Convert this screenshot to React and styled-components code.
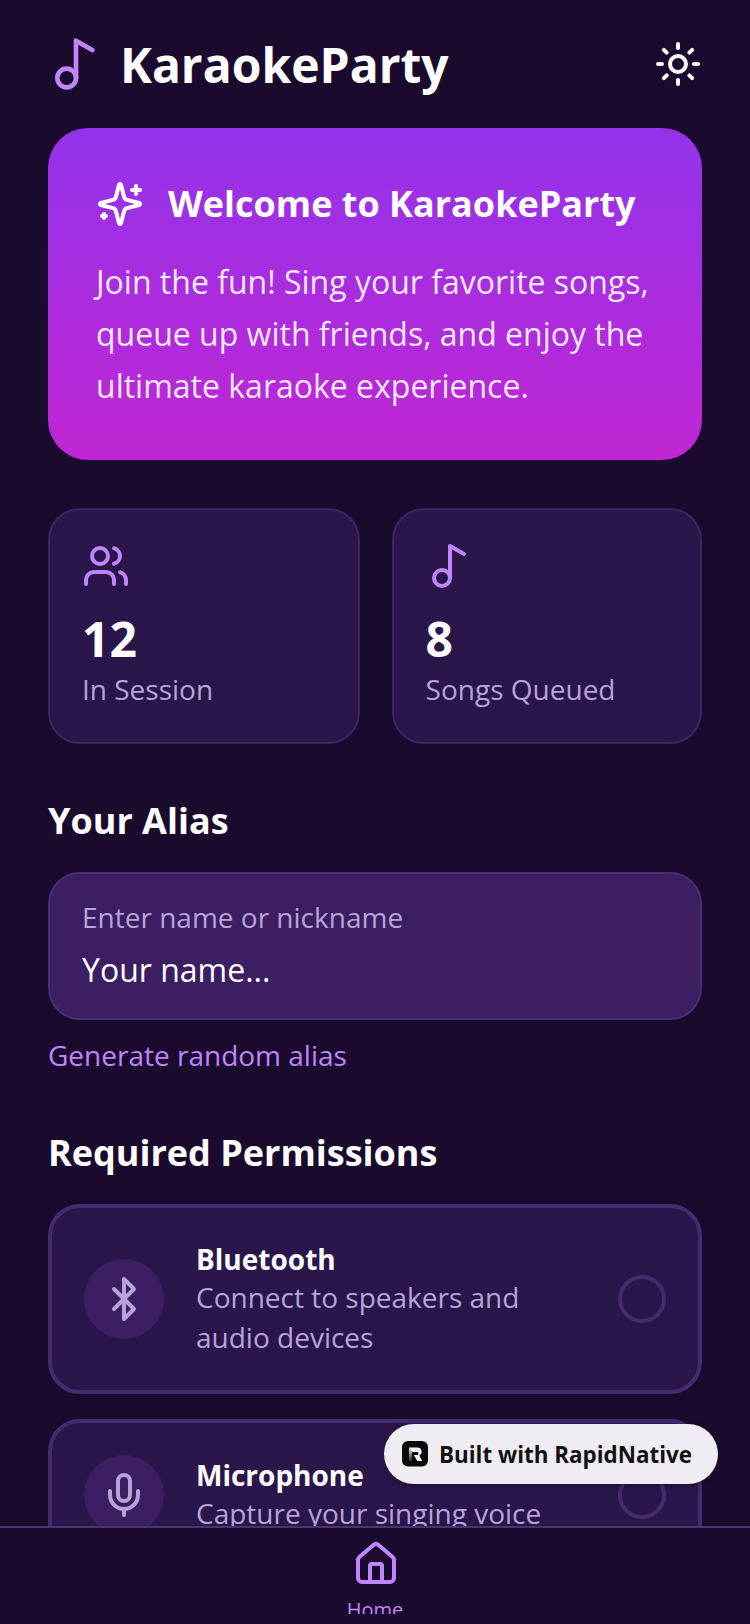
import React from 'react';
import styled, { createGlobalStyle } from 'styled-components';
import { Music2, Sun, Users, Bluetooth, Mic, House } from 'lucide-react';

const Global = createGlobalStyle`
  html, body { margin: 0; padding: 0; background: #1a0b2e; }
  * { box-sizing: border-box; }
`;
const Screen = styled.div`
  position: relative; width: 750px; height: 1624px; overflow: hidden; padding-bottom: 10px;
  display: flex; flex-direction: column; background: #1a0b2e;
  font-family: "Open Sans", sans-serif; color: #fff;
`;
const Content = styled.main`
  flex: 1; min-height: 0; overflow: hidden; padding: 0 48px;
  display: flex; flex-direction: column;
`;
const Header = styled.header`
  height: 128px; flex: none; display: flex; align-items: center; justify-content: space-between;
`;
const Brand = styled.div`
  display: flex; align-items: center; gap: 16px;
`;
const Title = styled.h1`
  margin: 2px 0 0; font-size: 48px; line-height: 64px; font-weight: 700;
`;
const Hero = styled.section`
  flex: none; height: 332px; border-radius: 40px; padding: 48px;
  background: linear-gradient(180deg, #9333ea 0%, #c026d3 100%);
`;
const HeroHead = styled.div`
  display: flex; align-items: center; gap: 24px; height: 56px; margin-bottom: 24px;
`;
const HeroTitle = styled.h2`
  margin: 0; font-size: 36px; line-height: 48px; font-weight: 700;
`;
const HeroText = styled.p`
  margin: 0; font-size: 32px; line-height: 52px; color: #f3e8ff;
`;
const Stats = styled.div`
  flex: none; display: grid; grid-template-columns: 311.6px 310.4px; column-gap: 32px; margin-top: 48px;
`;
const StatCard = styled.div`
  height: 236px; padding: 32px; border-radius: 32px;
  background: #2a164a; border: 2px solid #3d2463;
  display: flex; flex-direction: column;
`;
const StatValue = styled.div`
  margin-top: 17px; font-size: 48px; line-height: 64px; font-weight: 700;
`;
const StatLabel = styled.div`
  font-size: 28px; line-height: 36px; color: #b8a3d9;
`;
const SectionTitle = styled.h3`
  margin: ${p => p.$top}px 0 0; font-size: 36px; line-height: 48px; font-weight: 700;
`;
const InputBox = styled.div`
  flex: none; height: 148px; margin-top: 27px; padding: 23px 32px; border-radius: 32px;
  background: #3c1f62; border: 2px solid #4a2d75;
`;
const InputLabel = styled.div`
  font-size: 28px; line-height: 40px; color: #b8a3d9;
`;
const InputValue = styled.div`
  margin-top: 11px; font-size: 32px; line-height: 44px; color: #fff;
`;
const LinkText = styled.div`
  margin-top: 15px; font-size: 28px; line-height: 40px; color: #c084fc;
`;
const PermCard = styled.div`
  flex: none; margin-top: ${p => p.$top}px; padding: 32px; border-radius: 32px;
  background: #2a164a; border: 4px solid #462b70;
  display: flex; align-items: center; gap: 32px;
`;
const PermIcon = styled.div`
  flex: none; width: 80px; height: 80px; border-radius: 50%; background: #3c1f62;
  display: flex; align-items: center; justify-content: center; color: #b8a3d9;
`;
const PermBody = styled.div`
  flex: 1; min-width: 0; padding-bottom: 1px;
`;
const PermName = styled.div`
  font-size: 28px; line-height: 38px; font-weight: 700; margin-bottom: -1px;
`;
const PermDesc = styled.div`
  font-size: 28px; line-height: 40px; color: #b8a3d9; width: 360px;
`;
const Radio = styled.div`
  flex: none; width: 48px; height: 48px; border-radius: 50%; border: 4px solid #462b70;
`;
const TabBar = styled.nav`
  flex: none; height: 88px; overflow: hidden; background: #1a0b2e; border-top: 2px solid #4a3470;
  display: flex; flex-direction: column; align-items: center; padding-top: 12px; position: relative; z-index: 1;
`;
const TabIcon = styled.div`
  display: flex; margin-left: 2px; color: #c084fc;
`;
const TabLabel = styled.div`
  margin-top: 8px; font-size: 20px; line-height: 28px; color: #c084fc;
`;
const Badge = styled.div`
  position: absolute; left: 384px; top: 1424px; width: 334px; height: 60px; z-index: 2;
  border-radius: 30px; background: #efedf3; box-shadow: 0 2px 6px rgba(0,0,0,.3);
  display: flex; align-items: center; gap: 11px; padding-left: 18px;
  color: #111; font-size: 22.4px; font-weight: 700; white-space: nowrap;
`;

const SparkleIcon = () => (
  <svg width="48" height="48" viewBox="0 0 24 24" fill="none" stroke="#fff" strokeWidth="2" strokeLinecap="round" strokeLinejoin="round">
    <path d="M9.937 15.5A2 2 0 0 0 8.5 14.063l-6.135-1.582a.5.5 0 0 1 0-.962L8.5 9.936A2 2 0 0 0 9.937 8.5l1.582-6.135a.5.5 0 0 1 .963 0L14.063 8.5A2 2 0 0 0 15.5 9.937l6.135 1.581a.5.5 0 0 1 0 .964L15.5 14.063a2 2 0 0 0-1.437 1.437l-1.582 6.135a.5.5 0 0 1-.963 0z" />
    <path d="M20 3v4" /><path d="M22 5h-4" /><path d="M4 17v2" /><path d="M5 18H3" />
  </svg>
);

const RapidLogo = () => (
  <svg width="26" height="26" viewBox="0 0 26 26">
    <defs>
      <linearGradient id="rapidStem" x1="0" y1="0" x2="0.2" y2="1">
        <stop offset="0" stopColor="#fff" />
        <stop offset="1" stopColor="#333" />
      </linearGradient>
    </defs>
    <rect width="26" height="25.5" rx="6" fill="#0a0a0a" />
    <path d="M7 6.5h8.5a4.2 4.2 0 0 1 1.7 8l3 5.5h-4.8l-3.6-6h3.3a1.4 1.4 0 0 0 0-2.9H10z" fill="#fff" />
    <path d="M7 6.5l3 4.6V20H7z" fill="url(#rapidStem)" />
  </svg>
);

export default function App() {
  return (
    <Screen>
      <Global />
      <Content>
        <Header>
          <Brand>
            <Music2 size={56} color="#c084fc" strokeWidth={2} />
            <Title>KaraokeParty</Title>
          </Brand>
          <Sun size={48} color="#fff" strokeWidth={2} />
        </Header>
        <Hero>
          <HeroHead>
            <SparkleIcon />
            <HeroTitle>Welcome to KaraokeParty</HeroTitle>
          </HeroHead>
          <HeroText>Join the fun! Sing your favorite songs, queue up with friends, and enjoy the ultimate karaoke experience.</HeroText>
        </Hero>
        <Stats>
          <StatCard>
            <Users size={48} color="#c084fc" strokeWidth={2} />
            <StatValue>12</StatValue>
            <StatLabel>In Session</StatLabel>
          </StatCard>
          <StatCard>
            <Music2 size={48} color="#c084fc" strokeWidth={2} />
            <StatValue>8</StatValue>
            <StatLabel>Songs Queued</StatLabel>
          </StatCard>
        </Stats>
        <SectionTitle $top={53}>Your Alias</SectionTitle>
        <InputBox>
          <InputLabel>Enter name or nickname</InputLabel>
          <InputValue>Your name...</InputValue>
        </InputBox>
        <LinkText>Generate random alias</LinkText>
        <SectionTitle $top={54}>Required Permissions</SectionTitle>
        <PermCard $top={27}>
          <PermIcon><Bluetooth size={48} strokeWidth={2} /></PermIcon>
          <PermBody>
            <PermName>Bluetooth</PermName>
            <PermDesc>Connect to speakers and audio devices</PermDesc>
          </PermBody>
          <Radio />
        </PermCard>
        <PermCard $top={25}>
          <PermIcon><Mic size={48} strokeWidth={2} /></PermIcon>
          <PermBody>
            <PermName>Microphone</PermName>
            <PermDesc>Capture your singing voice</PermDesc>
          </PermBody>
          <Radio />
        </PermCard>
      </Content>
      <TabBar>
        <TabIcon><House size={48} strokeWidth={2} /></TabIcon>
        <TabLabel>Home</TabLabel>
      </TabBar>
      <Badge>
        <RapidLogo />
        Built with RapidNative
      </Badge>
    </Screen>
  );
}
